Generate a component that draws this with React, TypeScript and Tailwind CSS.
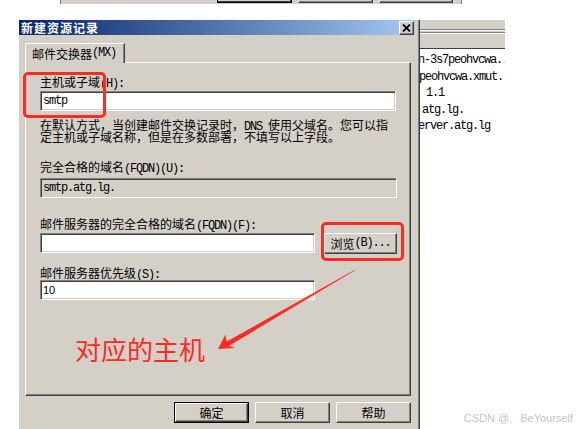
import React from "react";

const M = ({ children }: { children: React.ReactNode }) => (
  <span className="font-['Liberation_Mono',monospace] tracking-[-1.2px]">{children}</span>
);

const sunken =
  "border border-t-[#808080] border-l-[#808080] border-b-white border-r-white shadow-[inset_1px_1px_0_#404040,inset_-1px_-1px_0_#d4d0c8]";
const raised =
  "border border-t-white border-l-white border-b-[#404040] border-r-[#404040] shadow-[inset_-1px_-1px_0_#808080]";

export default function App() {
  return (
    <div className="relative w-[577px] h-[429px] overflow-hidden bg-white text-black text-[12px] leading-[13px] font-['Noto_Sans_CJK_SC',sans-serif]">
      {/* strip of a window behind */}
      <div className="ml-[60px] flex h-[4px] w-[402px] bg-[#d4d0c8] border-l border-r border-[#808080]">
        <div className="ml-[156px] h-[3px] w-[75px] border-x border-b border-black shadow-[inset_-1px_-1px_0_#404040]" />
        <div className="ml-[6px] h-[3px] w-[75px] border-l border-r border-b border-l-white border-r-[#404040] border-b-[#404040] shadow-[inset_-1px_-1px_0_#808080]" />
        <div className="ml-[6px] h-[3px] w-[74px] border-l border-r border-b border-l-white border-r-[#404040] border-b-[#404040] shadow-[inset_-1px_-1px_0_#808080]" />
      </div>

      <div className="mt-[16px] flex">
        {/* dialog */}
        <div className="ml-[19px] flex h-[409px] w-[401px] flex-col bg-[#d4d0c8] border-r border-r-[#404040] shadow-[inset_-1px_0_0_#808080]">
          <div className="flex h-[15px] w-[396px] shrink-0 items-center justify-between bg-linear-to-r from-[#0a246a] to-[#a6caf0]">
            <span className="ml-[2px] font-bold tracking-[1px] text-white leading-[15px]">新建资源记录</span>
            <div className={`mr-[1px] flex h-[14px] w-[15px] items-center justify-center bg-[#d4d0c8] ${raised}`}>
              <svg width="9" height="8" viewBox="0 0 9 8">
                <path d="M1 0.5 L8 7.5 M8 0.5 L1 7.5" stroke="#000" strokeWidth="1.8" />
              </svg>
            </div>
          </div>

          {/* tab */}
          <div className="ml-[6px] mt-[8px] flex shrink-0">
            <div className="relative z-10 -mb-px flex h-[20px] w-[100px] items-center bg-[#d4d0c8] border-l border-t border-r border-l-white border-t-white border-r-[#404040] rounded-tl-[2px] shadow-[inset_-1px_0_0_#808080] pl-[6px]">
              邮件交换器<M>(MX)</M>
            </div>
          </div>
          <div className="ml-[6px] flex h-[334px] w-[386px] shrink-0 flex-col border border-t-white border-l-white border-r-[#404040] border-b-[#404040] shadow-[inset_-1px_-1px_0_#808080] pl-[14px]">
            <div className="mt-[12px] h-[13px] whitespace-nowrap">
              主机或子域<M>(H):</M>
            </div>
            <div className={`mt-[3px] flex h-[20px] w-[356px] shrink-0 items-center bg-white pl-[2px] ${sunken}`}>
              <M>smtp</M>
            </div>
            <div className="mt-[8px] flex flex-col leading-[12px] whitespace-nowrap">
              <div className="h-[12px]">
                在默认方式，当创建邮件交换记录时，<M>DNS </M>使用父域名。您可以指
              </div>
              <div className="h-[12px]">定主机或子域名称，但是在多数部署，不填写以上字段。</div>
            </div>
            <div className="mt-[17px] h-[13px] whitespace-nowrap">
              完全合格的域名<M>(FQDN)(U):</M>
            </div>
            <div className={`mt-[5px] flex h-[20px] w-[357px] shrink-0 items-center bg-[#d4d0c8] pl-[2px] ${sunken}`}>
              <M>smtp.atg.lg.</M>
            </div>
            <div className="mt-[19px] h-[13px] whitespace-nowrap">
              邮件服务器的完全合格的域名<M>(FQDN)(F):</M>
            </div>
            <div className="mt-[3px] flex h-[21px] shrink-0 items-start">
              <div className={`h-[20px] w-[275px] bg-white ${sunken}`} />
              <div className={`ml-[9px] flex h-[21px] w-[73px] items-center justify-center bg-[#d4d0c8] ${raised}`}>
                浏览<M>(B)...</M>
              </div>
            </div>
            <div className="mt-[12px] h-[13px] whitespace-nowrap">
              邮件服务器优先级<M>(S):</M>
            </div>
            <div className={`mt-[1px] flex h-[20px] w-[275px] shrink-0 items-center bg-white pl-[2px] font-['Liberation_Sans',sans-serif] text-[11px] ${sunken}`}>
              10
            </div>
            <div className="ml-[35px] mt-[36px] h-[26px] text-[26px] leading-[26px] text-[#ff2a22]">对应的主机</div>
          </div>

          {/* buttons */}
          <div className="ml-[6px] mt-[6px] flex w-[386px] shrink-0 justify-end gap-[6px]">
            <div className="h-[21px] w-[75px] border border-black">
              <div className={`flex h-full w-full items-center justify-center bg-[#d4d0c8] ${raised}`}>确定</div>
            </div>
            <div className={`flex h-[21px] w-[75px] items-center justify-center bg-[#d4d0c8] ${raised}`}>取消</div>
            <div className={`flex h-[21px] w-[75px] items-center justify-center bg-[#d4d0c8] ${raised}`}>帮助</div>
          </div>
        </div>

        {/* list view behind */}
        <div className="flex w-[85px] flex-col overflow-hidden">
          <div className="flex h-[29px] shrink-0 flex-col bg-[#d4d0c8]">
            <div className="h-[9px]" />
            <div className="h-px bg-[#808080]" />
            <div className="h-px bg-white" />
            <div className="h-px" />
            <div className="h-px bg-[#808080]" />
            <div className="h-px bg-white" />
            <div className="flex-1" />
            <div className="h-px bg-[#404040]" />
          </div>
          <div className="flex flex-col whitespace-nowrap pt-[1px] leading-[16px]">
            <div className="-ml-[2px] h-[16.6px]"><M>n-3s7peohvcwa..</M></div>
            <div className="-ml-[1px] h-[16.6px]"><M>peohvcwa.xmut..</M></div>
            <div className="h-[16.6px] pl-[6px]"><M>1.1</M></div>
            <div className="h-[16.6px] pl-[2px]"><M>atg.lg.</M></div>
            <div className="-ml-[2px] h-[16.6px]"><M>erver.atg.lg</M></div>
          </div>
        </div>
      </div>

      {/* annotations */}
      <div className="pointer-events-none absolute left-[23px] top-[72px] h-[46px] w-[83px] rounded-[5px] border-[3px] border-[#ff2a22]" />
      <div className="pointer-events-none absolute left-[321px] top-[222px] h-[39px] w-[83px] rounded-[5px] border-[3px] border-[#ff2a22]" />
      <svg className="pointer-events-none absolute left-0 top-0" width="577" height="429" viewBox="0 0 577 429">
        <polygon
          points="218,349 225.3,334.7 226.8,341.5 354.85,269.74 355.15,270.26 229,345.8 235,348"
          fill="#ff2a22"
        />
      </svg>

      <div className="absolute bottom-[5px] right-[4px] font-['Liberation_Sans',sans-serif] text-[11px] leading-[12px] text-[#c4c4c4]">
        CSDN @、BeYourself
      </div>
    </div>
  );
}
